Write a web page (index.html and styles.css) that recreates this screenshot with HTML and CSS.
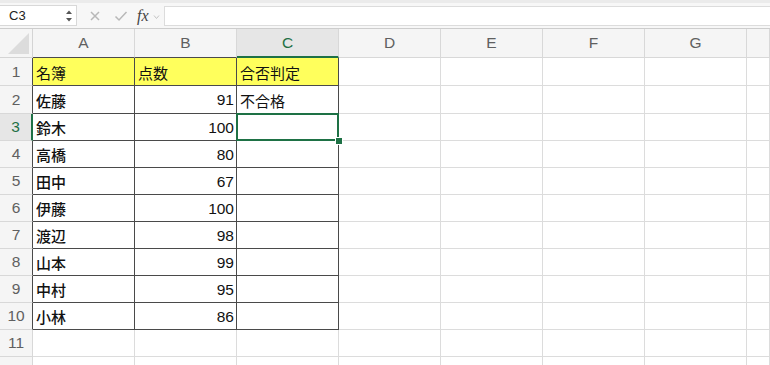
FILE: index.html
```html
<!DOCTYPE html>
<html lang="ja">
<head>
<meta charset="utf-8">
<link rel="stylesheet" href="styles.css">
</head>
<body>
<div class="toolbar">
  <div class="namebox">
    <span class="ref">C3</span>
    <svg class="spin" width="8" height="14" viewBox="0 0 8 14"><path d="M1 5 L4 1.5 L7 5 Z" fill="#555"/><path d="M1 9 L4 12.5 L7 9 Z" fill="#555"/></svg>
  </div>
  <svg class="tb-icon x" width="12" height="12" viewBox="0 0 12 12"><path d="M2 2 L10 10 M10 2 L2 10" stroke="#b8b8b8" stroke-width="1.5" fill="none"/></svg>
  <svg class="tb-icon chk" width="14" height="12" viewBox="0 0 14 12"><path d="M1.5 6.5 L5 10 L12.5 2" stroke="#b8b8b8" stroke-width="1.5" fill="none"/></svg>
  <span class="fx">fx</span>
  <svg class="chev" width="7" height="6" viewBox="0 0 7 6"><path d="M1 1.5 L3.5 4.5 L6 1.5" stroke="#c4c4c4" stroke-width="1" fill="none"/></svg>
  <div class="formula"></div>
</div>
<div class="sheet">
  <div class="corner"><svg width="32" height="28" viewBox="0 0 32 28"><path d="M8 25 L29 25 L29 4 Z" fill="#dcdcdc"/></svg></div>
  <div class="ch dk">A</div><div class="ch dk">B</div><div class="ch act">C</div><div class="ch">D</div><div class="ch">E</div><div class="ch">F</div><div class="ch">G</div><div class="ch"></div>

  <div class="rh dk">1</div><div class="c bx hl">名簿</div><div class="c bx hl">点数</div><div class="c bx hl">合否判定</div><div class="c"></div><div class="c"></div><div class="c"></div><div class="c"></div><div class="c"></div>
  <div class="rh dk">2</div><div class="c bx b">佐藤</div><div class="c bx num">91</div><div class="c bx">不合格</div><div class="c"></div><div class="c"></div><div class="c"></div><div class="c"></div><div class="c"></div>
  <div class="rh act">3</div><div class="c bx b">鈴木</div><div class="c bx num">100</div><div class="c bx sel"><span class="handle"></span></div><div class="c"></div><div class="c"></div><div class="c"></div><div class="c"></div><div class="c"></div>
  <div class="rh dk">4</div><div class="c bx b">高橋</div><div class="c bx num">80</div><div class="c bx"></div><div class="c"></div><div class="c"></div><div class="c"></div><div class="c"></div><div class="c"></div>
  <div class="rh dk">5</div><div class="c bx b">田中</div><div class="c bx num">67</div><div class="c bx"></div><div class="c"></div><div class="c"></div><div class="c"></div><div class="c"></div><div class="c"></div>
  <div class="rh dk">6</div><div class="c bx b">伊藤</div><div class="c bx num">100</div><div class="c bx"></div><div class="c"></div><div class="c"></div><div class="c"></div><div class="c"></div><div class="c"></div>
  <div class="rh dk">7</div><div class="c bx b">渡辺</div><div class="c bx num">98</div><div class="c bx"></div><div class="c"></div><div class="c"></div><div class="c"></div><div class="c"></div><div class="c"></div>
  <div class="rh dk">8</div><div class="c bx b">山本</div><div class="c bx num">99</div><div class="c bx"></div><div class="c"></div><div class="c"></div><div class="c"></div><div class="c"></div><div class="c"></div>
  <div class="rh dk">9</div><div class="c bx b">中村</div><div class="c bx num">95</div><div class="c bx"></div><div class="c"></div><div class="c"></div><div class="c"></div><div class="c"></div><div class="c"></div>
  <div class="rh dk">10</div><div class="c bx b">小林</div><div class="c bx num">86</div><div class="c bx"></div><div class="c"></div><div class="c"></div><div class="c"></div><div class="c"></div><div class="c"></div>
  <div class="rh">11</div><div class="c"></div><div class="c"></div><div class="c"></div><div class="c"></div><div class="c"></div><div class="c"></div><div class="c"></div><div class="c"></div>
  <div class="rh">12</div><div class="c"></div><div class="c"></div><div class="c"></div><div class="c"></div><div class="c"></div><div class="c"></div><div class="c"></div><div class="c"></div>
</div>
</body>
</html>
```
FILE: styles.css
```css
* { box-sizing: border-box; }
html, body { margin: 0; padding: 0; }
body {
  width: 770px;
  height: 365px;
  overflow: hidden;
  background: #fff;
  font-family: "Liberation Sans", "Noto Sans CJK JP", sans-serif;
}
.toolbar {
  height: 29px;
  background: #f7f7f7;
  border-top: 3px solid #ebebeb;
  border-bottom: 1px solid #cdcdcd;
  display: flex;
  align-items: center;
}
.namebox {
  width: 77px;
  height: 21px;
  background: #fff;
  border: 1px solid #d8d8d8;
  border-left: none;
  display: flex;
  align-items: center;
  justify-content: space-between;
  padding: 0 3px 0 9px;
}
.ref { font-size: 13px; color: #222; }
.spin { display: block; }
.tb-icon { display: block; }
.x { margin-left: 12px; }
.chk { margin-left: 13px; }
.fx {
  margin-left: 9px;
  font-family: "Liberation Serif", serif;
  font-style: italic;
  font-size: 16px;
  color: #444;
  line-height: 1;
}
.chev { display: block; margin-left: 4px; margin-top: 2px; }
.formula {
  flex: 1;
  height: 20px;
  margin-left: 4px;
  background: #fff;
  border: 1px solid #dcdcdc;
  border-right: none;
}
.sheet {
  display: grid;
  grid-template-columns: 33px repeat(7, 102px) 1fr;
  grid-template-rows: 29px 28px 28px;
  grid-auto-rows: 27px;
}
.corner {
  background: #f5f5f5;
  border-right: 1px solid #d4d4d4;
  border-bottom: 1px solid #d4d4d4;
}
.corner svg { display: block; }
.ch, .rh {
  background: #f5f5f5;
  color: #606060;
  font-size: 15.5px;
  display: flex;
  align-items: center;
  justify-content: center;
  border-right: 1px solid #d8d8d8;
  border-bottom: 1px solid #d8d8d8;
}
.ch.dk { border-bottom-color: #4a4a4a; }
.rh.dk { border-right-color: #4a4a4a; }
.ch.act {
  background: #e6e6e6;
  color: #1e7145;
  border-bottom: 2px solid #1e7145;
}
.rh.act {
  background: #e6e6e6;
  color: #1e7145;
  border-right: 2px solid #1e7145;
}
.c {
  position: relative;
  border-right: 1px solid #dcdcdc;
  border-bottom: 1px solid #dcdcdc;
  font-size: 15px;
  color: #111;
  display: flex;
  align-items: center;
  padding: 1px 3px 0 3px;
  white-space: nowrap;
}
.c.bx { border-right-color: #4a4a4a; border-bottom-color: #4a4a4a; }
.c.hl { background: #ffff5c; }
.c.b { font-weight: 500; }
.c.num { justify-content: flex-end; font-size: 15.5px; padding-right: 2px; }
.c.sel::before {
  content: "";
  position: absolute;
  top: -1px;
  left: -1px;
  right: -1px;
  bottom: -1px;
  border: 2px solid #1e7145;
}
.handle {
  position: absolute;
  right: -4px;
  bottom: -4px;
  width: 6px;
  height: 6px;
  background: #1e7145;
  outline: 1px solid #fff;
  z-index: 2;
}
```
